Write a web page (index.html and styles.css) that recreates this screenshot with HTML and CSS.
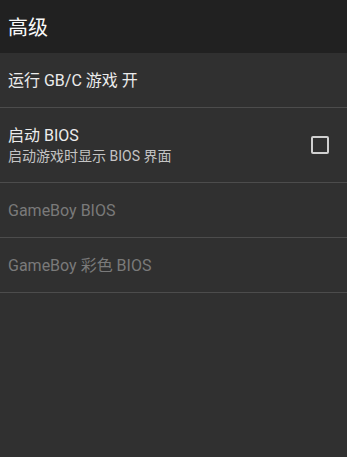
FILE: index.html
```html
<!DOCTYPE html>
<html lang="zh-CN">
<head>
<meta charset="UTF-8" />
<title>高级</title>
<link rel="stylesheet" href="styles.css">
</head>
<body>

<div class="toolbar">
  <span class="toolbar-title">高级</span>
</div>

<div class="prefs">
  <div class="pref">
    <div class="pref-text">
      <div class="pref-title">运行 GB/C 游戏 开</div>
    </div>
  </div>

  <div class="pref pref-tall">
    <div class="pref-text">
      <div class="pref-title">启动 BIOS</div>
      <div class="pref-summary">启动游戏时显示 BIOS 界面</div>
    </div>
    <span class="checkbox"></span>
  </div>

  <div class="pref disabled">
    <div class="pref-text">
      <div class="pref-title">GameBoy BIOS</div>
    </div>
  </div>

  <div class="pref disabled">
    <div class="pref-text">
      <div class="pref-title">GameBoy 彩色 BIOS</div>
    </div>
  </div>
</div>

</body>
</html>
```

FILE: styles.css
```css
body {
  margin: 0;
  background: #303030;
  font-family: Roboto, "Noto Sans CJK SC", sans-serif;
  color: #ececec;
  height: 457px;
  overflow: hidden;
}

.toolbar {
  height: 53px;
  background: #212121;
  display: flex;
  align-items: center;
  padding: 0 8px;
}

.toolbar-title {
  font-size: 20px;
  color: #fafafa;
  margin-top: -1px;
}

.pref {
  height: 54px;
  border-bottom: 1px solid #4c4c4c;
  display: flex;
  align-items: center;
  padding: 0 8px;
}

.pref-tall {
  height: 74px;
}

.pref-text {
  flex-grow: 1;
}

.pref-title {
  font-size: 16px;
  line-height: 21px;
}

.pref-summary {
  font-size: 14px;
  line-height: 20px;
  color: #c4c4c4;
}

.disabled .pref-title {
  color: #7a7a7a;
}

/* checkbox vuota */
.checkbox {
  width: 14px;
  height: 14px;
  border: 2px solid #d0d0d0;
  border-radius: 2px;
  margin-right: 10px;
}
```
